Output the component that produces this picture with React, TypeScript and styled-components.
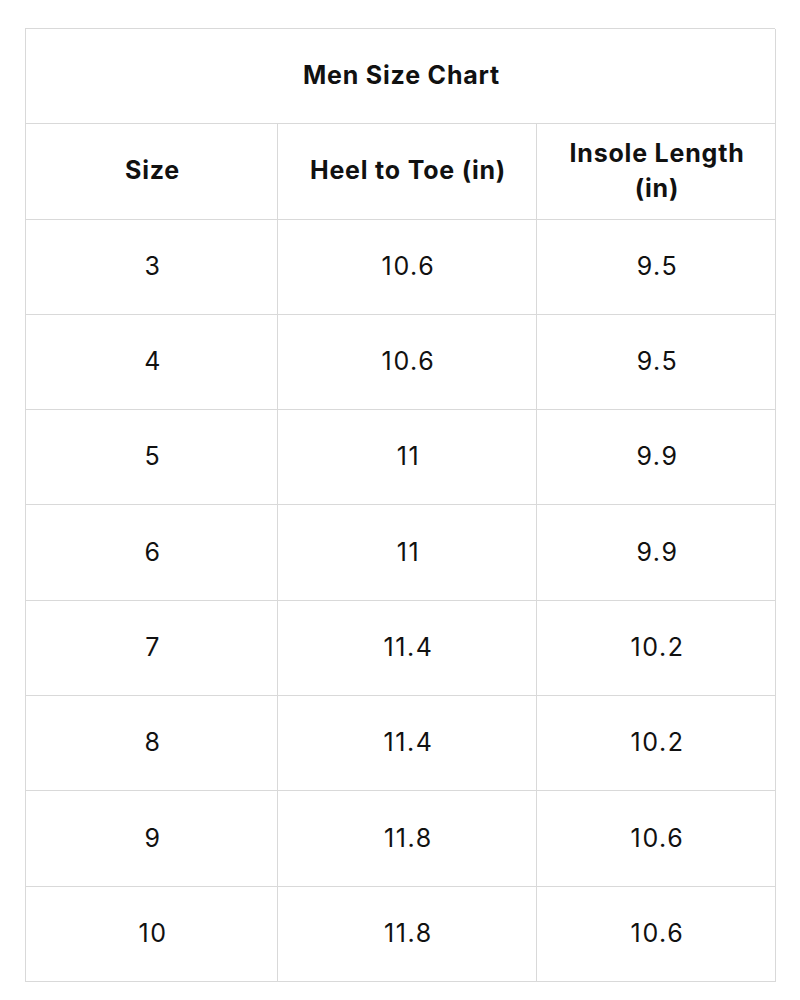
import React from "react";
import styled, { createGlobalStyle } from "styled-components";

const Global = createGlobalStyle`
  html, body { margin: 0; padding: 0; background: #ffffff; }
  body { font-family: "Inter", "Open Sans", sans-serif; color: #111111; }
`;

const Page = styled.div`
  width: 800px;
  height: 1000px;
  padding: 28px 25px 0 25px;
  box-sizing: border-box;
`;

const Table = styled.div`
  display: grid;
  grid-template-columns: 252px 259px 239px;
  grid-template-rows: repeat(10, 95.3px);
  width: 750px;
  border-top: 1px solid #d9d9d9;
  border-left: 1px solid #d9d9d9;
  box-sizing: border-box;
`;

const Cell = styled.div<{ $bold?: boolean; $span?: number }>`
  grid-column: ${(p) => (p.$span ? `span ${p.$span}` : "auto")};
  display: flex;
  align-items: center;
  justify-content: center;
  text-align: center;
  border-right: 1px solid #d9d9d9;
  border-bottom: 1px solid #d9d9d9;
  box-sizing: border-box;
  padding: 0 23px 1px ${(p) => (p.$bold ? "25px" : "26px")};
  font-size: 25px;
  line-height: 35px;
  font-weight: ${(p) => (p.$bold ? 700 : 400)};
  letter-spacing: ${(p) => (p.$bold ? "0.8px" : "1.6px")};
  color: #111111;
`;

const rows: [string, string, string][] = [
  ["3", "10.6", "9.5"],
  ["4", "10.6", "9.5"],
  ["5", "11", "9.9"],
  ["6", "11", "9.9"],
  ["7", "11.4", "10.2"],
  ["8", "11.4", "10.2"],
  ["9", "11.8", "10.6"],
  ["10", "11.8", "10.6"],
];

export default function App() {
  return (
    <Page>
      <Global />
      <Table>
        <Cell $bold $span={3}>Men Size Chart</Cell>
        <Cell $bold>Size</Cell>
        <Cell $bold>Heel to Toe (in)</Cell>
        <Cell $bold>Insole Length (in)</Cell>
        {rows.map((r, i) => (
          <React.Fragment key={i}>
            <Cell>{r[0]}</Cell>
            <Cell>{r[1]}</Cell>
            <Cell>{r[2]}</Cell>
          </React.Fragment>
        ))}
      </Table>
    </Page>
  );
}
